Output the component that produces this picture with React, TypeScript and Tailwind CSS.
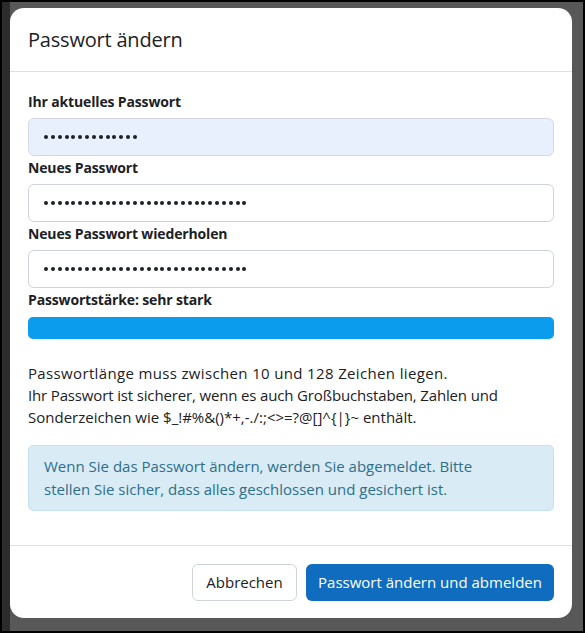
import React from 'react';

const Dots: React.FC<{ count: number }> = ({ count }) => (
  <span className="flex items-center gap-[2.85px]">
    {Array.from({ length: count }).map((_, i) => (
      <span key={i} className="block w-[4px] h-[4px] rounded-full bg-[#1d2125]" />
    ))}
  </span>
);

const PasswordField: React.FC<{ label: string; count: number; autofill?: boolean }> = ({ label, count, autofill }) => (
  <div className="flex flex-col">
    <label className="text-[14px] font-bold leading-[20px] tracking-[-0.15px] mb-[6px]">{label}</label>
    <div
      className={
        'h-[38px] rounded-[6px] border px-[15px] flex items-center ' +
        (autofill ? 'bg-[#e8f0fe] border-[#d3dae3]' : 'bg-white border-[#ced4da]')
      }
    >
      <Dots count={count} />
    </div>
  </div>
);

export default function App() {
  return (
    <div
      className="w-[585px] h-[633px] bg-black p-[2px] text-[#1d2125]"
      style={{ fontFamily: '"Open Sans", "Noto Sans", "Liberation Sans", sans-serif' }}
    >
      <div className="flex h-full bg-[#585858]">
        {/* page behind the overlay */}
        <div className="w-[8px] bg-[#2c2c2c]" />

        <div className="w-[562px] mt-[6px] mb-[13px] bg-white rounded-[14px] flex flex-col overflow-hidden">
          {/* Header */}
          <div className="h-[64px] px-[18px] flex items-center border-b border-[#dee2e6]">
            <h2 className="text-[20px] leading-none tracking-[-0.2px]">Passwort ändern</h2>
          </div>

          {/* Body */}
          <div className="flex-1 px-[18px] pt-[20px] pb-[34px] flex flex-col">
            <div className="flex flex-col gap-[2px]">
              <PasswordField label="Ihr aktuelles Passwort" count={14} autofill />
              <PasswordField label="Neues Passwort" count={30} />
              <PasswordField label="Neues Passwort wiederholen" count={30} />
            </div>

            <div className="mt-[2px] text-[14px] font-bold leading-[20px] tracking-[-0.15px]">Passwortstärke: sehr stark</div>
            <div className="mt-[7px] h-[22px] rounded-[5px] bg-[#0c9cee]" />

            <p className="mt-[23px] text-[15px] leading-[22px]">
              <span className="tracking-[0.35px]">Passwortlänge muss zwischen 10 und 128 Zeichen liegen.</span>
              <br />
              <span className="tracking-[-0.15px]">Ihr Passwort ist sicherer, wenn es auch Großbuchstaben, Zahlen und</span>
              <br />
              Sonderzeichen wie $_!#%&amp;()*+,-./:;&lt;&gt;=?@[]^{'{'}|{'}'}~ enthält.
            </p>

            <div className="mt-[17px] rounded-[5px] border border-[#c4e2ef] bg-[#d9ecf5] px-[15px] py-[9px] text-[15px] leading-[23px] text-[#2e6e8c]">
              Wenn Sie das Passwort ändern, werden Sie abgemeldet. Bitte
              <br />
              stellen Sie sicher, dass alles geschlossen und gesichert ist.
            </div>
          </div>

          {/* Footer */}
          <div className="h-[73px] px-[18px] border-t border-[#dee2e6] flex items-center justify-end gap-[9px]">
            <button className="h-[37px] w-[105px] rounded-[6px] border border-[#ced4da] bg-white text-[15px]">
              Abbrechen
            </button>
            <button className="h-[37px] w-[248px] rounded-[6px] bg-[#0f6cbf] text-white text-[15px]">
              Passwort ändern und abmelden
            </button>
          </div>
        </div>
      </div>
    </div>
  );
}
